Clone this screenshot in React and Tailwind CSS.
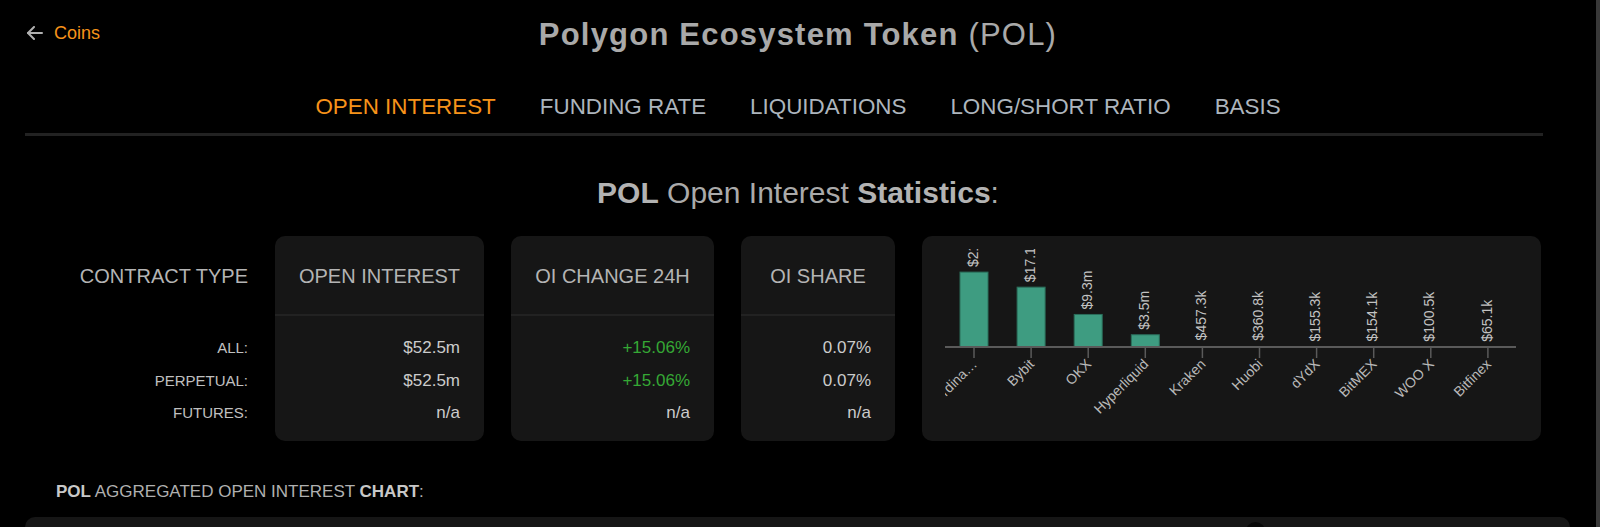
import React from "react";

const ticks = [52, 109.1, 166.2, 223.3, 280.4, 337.5, 394.6, 451.7, 508.8, 565.9];
const vals = [21.4, 17.1, 9.3, 3.5, 0.4573, 0.3608, 0.1553, 0.1541, 0.1005, 0.0651];
const valLabels = ["$21.4m", "$17.1m", "$9.3m", "$3.5m", "$457.3k", "$360.8k", "$155.3k", "$154.1k", "$100.5k", "$65.1k"];
const names = ["Coordina…", "Bybit", "OKX", "Hyperliquid", "Kraken", "Huobi", "dYdX", "BitMEX", "WOO X", "Bitfinex"];
const AXIS = 111;

function BarChart() {
  return (
    <svg width="619" height="205" viewBox="0 0 619 205" className="block">
      <defs>
        <clipPath id="plotclip">
          <rect x="23" y="13" width="590" height="190" />
        </clipPath>
      </defs>
      <g clipPath="url(#plotclip)" fontFamily="'Liberation Sans', Arial, sans-serif" fontSize="14">
        {ticks.map((t, i) => {
          const h = vals[i] * 3.5;
          const top = AXIS - h;
          return (
            <g key={i}>
              {h > 2 && (
                <rect x={t - 14} y={top} width="28" height={h} fill="#3e9c81" stroke="#2b6e5b" strokeWidth="1" />
              )}
              <text
                x={t}
                y={top - 5}
                transform={`rotate(-90 ${t} ${top - 5})`}
                dominantBaseline="middle"
                fill="#c2c2c2"
              >
                {valLabels[i]}
              </text>
              <line x1={t} y1={AXIS} x2={t} y2={AXIS + 11} stroke="#5a5a5a" strokeWidth="1.5" />
              <text
                x={t + 4}
                y={AXIS + 18}
                transform={`rotate(-45 ${t + 4} ${AXIS + 18})`}
                textAnchor="end"
                fill="#b9b9b9"
              >
                {names[i]}
              </text>
            </g>
          );
        })}
        <line x1="23" y1={AXIS} x2="594" y2={AXIS} stroke="#5a5a5a" strokeWidth="2" />
      </g>
    </svg>
  );
}

function StatCard({ width, title, values }) {
  return (
    <div className={`${width} h-[205px] shrink-0 rounded-[10px] bg-[#161616]`}>
      <div className="pt-[28px] pb-[26px] text-center text-[20px] leading-[24px] text-[#b4b4b4] whitespace-nowrap">
        {title}
      </div>
      <div className="h-[2px] bg-[#222222]" />
      <div className="pt-[16px] px-6 text-right text-[17px] leading-[32.5px]">
        {values.map((v, i) => (
          <div key={i} className={v.startsWith("+") ? "text-[#35a835]" : "text-[#cccccc]"}>
            {v}
          </div>
        ))}
      </div>
    </div>
  );
}

export default function App() {
  return (
    <div className="flex h-[527px] w-full overflow-hidden bg-black font-['Liberation_Sans',Arial,sans-serif]">
      <main className="w-[1596px] shrink-0 px-[25px]">
        {/* Header */}
        <div className="grid grid-cols-[1fr_auto_1fr] items-start pt-[17px]">
          <div className="mt-[4px] flex items-center gap-[11px] pl-[1px] text-[18px] leading-[24px] text-[#f7931a]">
            <svg width="17" height="14" viewBox="0 0 17 14" fill="none" stroke="#b0b0b0" strokeWidth="2" strokeLinecap="round" strokeLinejoin="round">
              <path d="M16 7H2" />
              <path d="M8 1L2 7l6 6" />
            </svg>
            <span>Coins</span>
          </div>
          <h1 className="text-[31px] leading-[36px] tracking-[1.2px] text-[#a9a9a9] whitespace-nowrap">
            <span className="font-bold">Polygon Ecosystem Token</span> <span>(POL)</span>
          </h1>
          <div />
        </div>

        {/* Tabs */}
        <div className="mt-[41px] flex justify-center gap-[44px] text-[22.4px] leading-[26px]">
          <span className="text-[#f7931a]">OPEN INTEREST</span>
          <span className="text-[#adb5bd]">FUNDING RATE</span>
          <span className="text-[#adb5bd]">LIQUIDATIONS</span>
          <span className="text-[#adb5bd]">LONG/SHORT RATIO</span>
          <span className="text-[#adb5bd]">BASIS</span>
        </div>
        <div className="mt-[13px] h-[3px] w-[1518px] bg-[#222222]" />

        {/* Section title */}
        <h2 className="mt-[39px] text-center text-[30px] leading-[36px] text-[#aaaaaa]">
          <span className="font-bold text-[#b3b3b3]">POL</span> Open Interest{" "}
          <span className="font-bold text-[#b3b3b3]">Statistics</span>:
        </h2>

        {/* Stats row */}
        <div className="mt-[25px] flex gap-[27px]">
          <div className="w-[223px] shrink-0 text-right">
            <div className="pt-[28px] pb-[26px] text-[20px] leading-[24px] text-[#b4b4b4]">CONTRACT TYPE</div>
            <div className="h-[2px]" />
            <div className="pt-[16px] text-[15px] leading-[32.5px] text-[#c0c0c0]">
              <div>ALL:</div>
              <div>PERPETUAL:</div>
              <div>FUTURES:</div>
            </div>
          </div>
          <StatCard width="w-[209px]" title="OPEN INTEREST" values={["$52.5m", "$52.5m", "n/a"]} />
          <StatCard width="w-[203px]" title="OI CHANGE 24H" values={["+15.06%", "+15.06%", "n/a"]} />
          <StatCard width="w-[154px]" title="OI SHARE" values={["0.07%", "0.07%", "n/a"]} />
          <div className="h-[205px] w-[619px] shrink-0 overflow-hidden rounded-[10px] bg-[#161616]">
            <BarChart />
          </div>
        </div>

        {/* Aggregated chart heading */}
        <div className="mt-[41px] pl-[31px] text-[17px] leading-[20px] text-[#b0b0b0]">
          <span className="font-bold text-[#c8c8c8]">POL</span> AGGREGATED OPEN INTEREST{" "}
          <span className="font-bold text-[#c8c8c8]">CHART</span>:
        </div>

        <div className="relative mt-[15px] h-[200px] w-[1545px] rounded-t-[10px] bg-[#161616]">
          <div className="absolute left-[1221px] top-[5px] h-[19px] w-[19px] rounded-full bg-[#080808]" />
        </div>
      </main>
      <div className="w-[4px] shrink-0 bg-[#383838]" />
    </div>
  );
}
